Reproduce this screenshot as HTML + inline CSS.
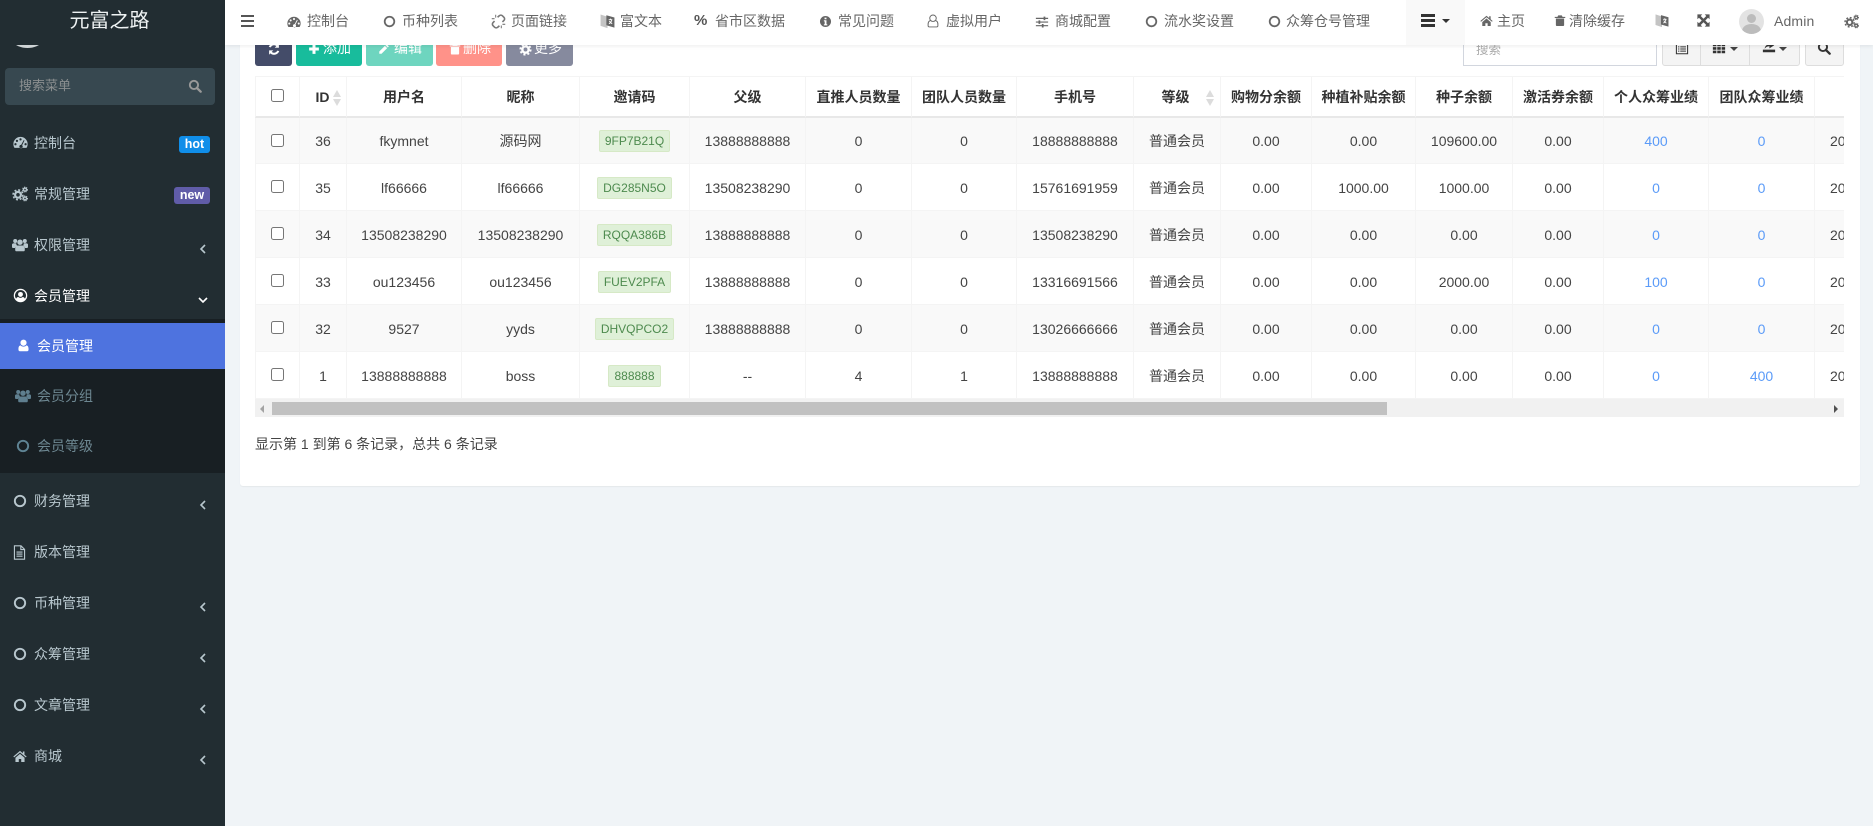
<!DOCTYPE html>
<html lang="zh-CN"><head><meta charset="utf-8"><title>会员管理</title>
<style>
*{box-sizing:border-box}
html,body{margin:0;padding:0;width:1873px;height:826px;overflow:hidden;background:#f0f4f7;font:14px "Liberation Sans","Noto Sans CJK SC",sans-serif;color:#444}
.a{position:absolute;white-space:nowrap}
svg.i{position:absolute;fill:currentColor;display:block}
#side{position:absolute;left:0;top:0;width:225px;height:826px;background:#222d32;overflow:hidden;color:#b8c7ce}
.mt{position:absolute;left:34px;height:20px;line-height:20px;white-space:nowrap}
.st{position:absolute;left:37px;height:20px;line-height:20px;white-space:nowrap}
#nav{position:absolute;left:225px;top:0;width:1648px;height:45px;background:#fff;box-shadow:0 1px 4px rgba(0,0,0,.08);z-index:5;color:#666}
.nt{position:absolute;top:11px;height:20px;line-height:20px;white-space:nowrap;color:#666}
.btn{position:absolute;top:25px;height:41px;border-radius:3px;color:#fff;line-height:48px}
#tb{position:absolute;left:255px;top:76px;width:1589px;height:323px;overflow:hidden}
table{border-collapse:separate;border-spacing:0;table-layout:fixed;width:1660px}
th,td{text-align:center;padding:0;border-right:1px solid #f4f4f4;white-space:nowrap;overflow:hidden}
th{height:42px;border-top:1px solid #f4f4f4;border-bottom:2px solid #e8e8e8;color:#333;font-weight:bold;position:relative}
td{height:47px;border-bottom:1px solid #f4f4f4;color:#444;padding-top:1px}
tr.f td{height:46px}
td:first-child,th:first-child{border-left:1px solid #f4f4f4}
tr.o td{background:#f9f9f9}
td.l{text-align:left;padding-left:15px}
th.l{text-align:left;padding-left:15px}
b.g{display:inline-block;font-weight:normal;font-size:12px;height:22px;line-height:20px;padding:0 5px;background:#dff0d8;border:1px solid #d6e9c6;color:#4d8a4e;border-radius:2px;vertical-align:middle}
.u{color:#5b9bf8}
input{margin:0;width:13px;height:13px;position:relative;top:-2px;vertical-align:middle}
.s1,.s2{position:absolute;width:0;height:0;border-left:4px solid transparent;border-right:4px solid transparent}
.s1{border-bottom:7px solid #dcdcdc}.s2{border-top:7px solid #dcdcdc}
.c{position:absolute;width:0;height:0;border-left:4px solid transparent;border-right:4px solid transparent;border-top:4px solid #444}
</style></head><body>
<svg width="0" height="0" style="position:absolute">
<symbol id="dash" viewBox="0 0 16 16"><path fill-rule="evenodd" d="M8 2A7.6 7.6 0 0 0 .4 9.6c0 1.6.4 2.9 1.2 4.1h12.8c.8-1.2 1.2-2.5 1.2-4.1A7.6 7.6 0 0 0 8 2zM8 3.4a1.2 1.2 0 1 1 0 2.4 1.2 1.2 0 0 1 0-2.4zM4.2 5a1.2 1.2 0 1 1 0 2.4 1.2 1.2 0 0 1 0-2.4zM2.6 8.6a1.2 1.2 0 1 1 0 2.4 1.2 1.2 0 0 1 0-2.4zM13.4 8.6a1.2 1.2 0 1 1 0 2.4 1.2 1.2 0 0 1 0-2.4zM11.4 5.4l.9.5-2.6 5a1.8 1.8 0 1 1-1-.4z"/></symbol>
<symbol id="cogs" viewBox="0 0 16 16"><g fill="none" stroke="currentColor"><circle cx="6" cy="8.8" r="2.9" stroke-width="2.2"/><circle cx="6" cy="8.8" r="4.9" stroke-width="1.6" stroke-dasharray="2 1.85"/><circle cx="13" cy="3.6" r="1.5" stroke-width="1.4"/><circle cx="13" cy="3.6" r="2.5" stroke-width="1" stroke-dasharray="1.1 1.02"/><circle cx="13" cy="12.4" r="1.5" stroke-width="1.4"/><circle cx="13" cy="12.4" r="2.5" stroke-width="1" stroke-dasharray="1.1 1.02"/></g></symbol>
<symbol id="users" viewBox="0 0 16 16"><circle cx="3.2" cy="4" r="2"/><circle cx="12.8" cy="4" r="2"/><circle cx="8" cy="5.2" r="2.7"/><path d="M0 7.6c0-1 1-1.4 2-1.4h2.2a4 4 0 0 0 .9 2.5c-1.2.4-2 1.3-2.2 2.3H1C.3 11 0 10.500 0 9.800zM16 7.600c0-1-1-1.400-2-1.400h-2.200a4 4 0 0 1-.9 2.500c1.200.4 2 1.300 2.200 2.300H15c.7 0 1-.5 1-1.200zM5.500 8.500h5c1.500 0 2.300 1.100 2.300 3v1.500c0 .8-.5 1.300-1.300 1.300h-7c-.8 0-1.300-.5-1.300-1.300v-1.500c0-1.900.8-3 2.300-3z"/></symbol>
<symbol id="uc" viewBox="0 0 16 16"><path fill-rule="evenodd" d="M8 .8a7.200 7.200 0 1 0 0 14.400A7.200 7.200 0 0 0 8 .8zM8 2.200a5.800 5.800 0 0 1 4.700 9.200c-.4-1.100-1.300-1.800-2.300-1.800a3.600 3.600 0 0 1-4.800 0c-1 0-1.900.7-2.300 1.800A5.800 5.800 0 0 1 8 2.200z"/><circle cx="8" cy="6.800" r="2.600"/></symbol>
<symbol id="user" viewBox="0 0 16 16"><circle cx="8" cy="4.600" r="3.800"/><path d="M4.300 7.800a5 5 0 0 0 7.400 0c1.500.2 2.500 1.800 2.500 4.200v1.200c0 1-.7 1.800-1.700 1.800H3.500c-1 0-1.700-.8-1.700-1.800V12c0-2.400 1-4 2.500-4.200z"/></symbol>
<symbol id="ring" viewBox="0 0 16 16"><circle cx="8" cy="8" r="5.900" fill="none" stroke="currentColor" stroke-width="2.200"/></symbol>
<symbol id="file" viewBox="0 0 16 16"><path fill="none" stroke="currentColor" stroke-width="1.200" d="M2.600.9h7l3.800 3.800v10.400H2.600zM9.400 1v3.900h3.900M4.800 7.500h6.400M4.800 9.700h6.400M4.800 11.900h6.400"/></symbol>
<symbol id="home" viewBox="0 0 16 16"><path d="M8 2.200.4 8.600l.9 1L8 4l6.700 5.600.9-1-2.500-2.100V2.800h-1.800v2.100zM2.800 10v4.800h3.800v-3.400h2.800v3.400h3.800V10L8 5.600z"/></symbol>
<symbol id="left" viewBox="0 0 10 12"><path d="M7 2 3 6l4 4" fill="none" stroke="currentColor" stroke-width="1.600"/></symbol>
<symbol id="down" viewBox="0 0 12 10"><path d="M2 3l4 4 4-4" fill="none" stroke="currentColor" stroke-width="1.600"/></symbol>
<symbol id="search" viewBox="0 0 16 16"><circle cx="6.800" cy="6.800" r="4.700" fill="none" stroke="currentColor" stroke-width="2.200"/><path d="M10.300 10.300l4.200 4.200" stroke="currentColor" stroke-width="2.600" stroke-linecap="round"/></symbol>
<symbol id="link" viewBox="0 0 16 16"><g fill="none" stroke="currentColor" stroke-width="1.700"><path d="M7 3.500 8.800 1.900a2.400 2.400 0 0 1 3.400 0l1.600 1.600a2.400 2.400 0 0 1 0 3.400L12.200 8.500M9 12.500l-1.800 1.600a2.400 2.400 0 0 1-3.400 0L2.200 12.500a2.400 2.400 0 0 1 0-3.400L3.800 7.500"/><path d="M.8 5h3M5 .8v3M15.200 11h-3M11 15.200v-3" stroke-width="1.100"/></g></symbol>
<symbol id="lang" viewBox="0 0 16 16"><path d="M.6 1 8 3.400V15.600L.6 13.200z" fill="#c4c4c4"/><path d="M6.800 1.800l8.600 2.500V15l-8.600-2.500z" fill="currentColor"/><path d="M9.300 6.600h3.800M11.200 5.400v1.400M12.500 7c-.5 2.200-1.600 3.300-3 3.900M10 8c.6 1.300 1.600 2.300 3 2.900" fill="none" stroke="#fff" stroke-width="1"/></symbol>
<symbol id="info" viewBox="0 0 16 16"><path fill-rule="evenodd" d="M8 1.200a6.800 6.800 0 1 0 0 13.600A6.800 6.800 0 0 0 8 1.200zM6.800 3.200h2.400v2H6.800zM6 6.400h3.200v5h1v1.400H6v-1.400h1v-3.600H6z"/></symbol>
<symbol id="uo" viewBox="0 0 16 16"><g fill="none" stroke="currentColor" stroke-width="1.100"><circle cx="8" cy="4.800" r="3.700"/><path d="M5 7.600C3.200 8 2.400 9.700 2.400 12v1.300c0 .9.600 1.500 1.500 1.500h8.200c.9 0 1.500-.6 1.500-1.500V12c0-2.300-.8-4-2.600-4.400"/></g></symbol>
<symbol id="sli" viewBox="0 0 16 16"><path d="M1 3.200h14v1.300H1zM1 7.400h14v1.300H1zM1 11.600h14v1.300H1z"/><path d="M9.800 1.900h2v4h-2zM4 6.100h2v4H4zM7.800 10.300h2v4h-2z"/></symbol>
<symbol id="trash" viewBox="0 0 16 16"><path fill-rule="evenodd" d="M5.600 1.200h4.800l1 2H15v1.400H1V3.200h3.600zM2.500 5.400h11v8.600c0 .8-.6 1.400-1.300 1.400H3.800c-.7 0-1.300-.6-1.300-1.400z"/></symbol>
<symbol id="exp" viewBox="0 0 16 16"><path d="M.5.500h6L4.600 2.400 8 5.800 11.400 2.400 9.500.5h6v6l-1.900-1.900L10.200 8l3.400 3.400 1.900-1.900v6h-6l1.900-1.900L8 10.200l-3.400 3.400 1.900 1.900h-6v-6l1.900 1.900L5.800 8 2.400 4.600.5 6.500z"/></symbol>
<symbol id="sync" viewBox="0 0 16 16"><path d="M13.600 1.500v5H8.800l1.800-1.800A4 4 0 0 0 4.300 6.200L2 5.600A6.400 6.400 0 0 1 12.300 3zM2.400 14.500v-5h4.800l-1.800 1.800a4 4 0 0 0 6.300-1.500l2.300.6A6.400 6.400 0 0 1 3.700 13z"/></symbol>
<symbol id="plus" viewBox="0 0 16 16"><path d="M6 1.500h4V6h4.500v4H10v4.500H6V10H1.500V6H6z"/></symbol>
<symbol id="pen" viewBox="0 0 16 16"><path d="M11.500 1.500 14.500 4.500 13 6 10 3zM9.200 3.800l3 3-7.500 7.500H1.700v-3z"/></symbol>
<symbol id="gear" viewBox="0 0 16 16"><circle cx="8" cy="8" r="3.900" fill="none" stroke="currentColor" stroke-width="3"/><circle cx="8" cy="8" r="6.300" fill="none" stroke="currentColor" stroke-width="2.400" stroke-dasharray="2.500 2.450"/></symbol>
<symbol id="cols" viewBox="0 0 16 16"><path d="M1 3h4v3H1zM6 3h4v3H6zM11 3h4v3h-4zM1 7h4v3H1zM6 7h4v3H6zM11 7h4v3h-4zM1 11h4v3H1zM6 11h4v3H6zM11 11h4v3h-4z"/></symbol>
<symbol id="list" viewBox="0 0 16 16"><path fill-rule="evenodd" d="M1 2h14v12H1zM2.200 3.200v9.600h11.600V3.200z"/><path d="M3.500 5h1.500v1.200H3.500zM6 5h6.500v1.200H6zM3.500 7.400h1.500v1.200H3.500zM6 7.400h6.500v1.200H6zM3.500 9.800h1.500V11H3.500zM6 9.800h6.500V11H6z"/></symbol>
<symbol id="dl" viewBox="0 0 16 16"><path d="M1 11h14v3H1zM3 10c.5-3 2-5 5.500-5V2.500L14 6l-5.500 3.500V7.200C6 7.200 4.500 8 3 10z"/></symbol>
</svg>

<div id="side">
<div class="a" style="left:0;top:0;width:219px;height:45px;line-height:42px;text-align:center;font-size:20px;color:#eef2f3;background:#222d32">元富之路</div>
<div class="a" style="left:0;top:45px;width:60px;height:3px;overflow:hidden"><div class="a" style="left:3.500px;top:-44px;width:47px;height:47px;border-radius:50%;background:#cfd4d6"></div></div>
<div class="a" style="left:5px;top:68px;width:210px;height:37px;background:#374850;border-radius:4px"></div>
<div class="a" style="left:19px;top:76px;height:20px;line-height:20px;font-size:13px;color:#8b8f90">搜索菜单</div>
<svg class="i" style="left:188px;top:79px;width:14px;height:14px;color:#999"><use href="#search"/></svg>

<svg class="i" style="left:13px;top:135px;width:15px;height:15px"><use href="#dash"/></svg><div class="mt" style="top:133px">控制台</div>
<div class="a" style="left:179px;top:136px;width:31px;height:17px;line-height:16px;background:#108ee9;border-radius:3px;color:#fff;font-weight:bold;font-size:12.500px;text-align:center">hot</div>
<svg class="i" style="left:12px;top:186px;width:16px;height:16px"><use href="#cogs"/></svg><div class="mt" style="top:184px">常规管理</div>
<div class="a" style="left:174px;top:187px;width:36px;height:17px;line-height:16px;background:#605ca8;border-radius:3px;color:#fff;font-weight:bold;font-size:12.500px;text-align:center">new</div>
<svg class="i" style="left:12px;top:237px;width:16px;height:16px"><use href="#users"/></svg><div class="mt" style="top:235px">权限管理</div>
<svg class="i" style="left:198px;top:243px;width:10px;height:12px"><use href="#left"/></svg>
<svg class="i" style="left:13px;top:288px;width:15px;height:15px;color:#fff"><use href="#uc"/></svg><div class="mt" style="top:286px;color:#fff">会员管理</div>
<svg class="i" style="left:197px;top:295px;width:12px;height:10px;color:#fff"><use href="#down"/></svg>

<div class="a" style="left:0;top:319px;width:225px;height:154px;background:#181f23"></div>
<div class="a" style="left:0;top:323px;width:225px;height:46px;background:#4e73df"></div>
<svg class="i" style="left:17px;top:339px;width:13px;height:13px;color:#fff"><use href="#user"/></svg><div class="st" style="top:336px;color:#fff">会员管理</div>
<svg class="i" style="left:15px;top:388px;width:16px;height:16px;color:#5f7f8f"><use href="#users"/></svg><div class="st" style="top:386px;color:#6d8791">会员分组</div>
<svg class="i" style="left:16px;top:439px;width:14px;height:14px;color:#5f8494"><use href="#ring"/></svg><div class="st" style="top:436px;color:#6d8791">会员等级</div>

<svg class="i" style="left:13px;top:494px;width:14px;height:14px"><use href="#ring"/></svg><div class="mt" style="top:491px">财务管理</div>
<svg class="i" style="left:198px;top:499px;width:10px;height:12px"><use href="#left"/></svg>
<svg class="i" style="left:12px;top:545px;width:15px;height:15px"><use href="#file"/></svg><div class="mt" style="top:542px">版本管理</div>
<svg class="i" style="left:13px;top:596px;width:14px;height:14px"><use href="#ring"/></svg><div class="mt" style="top:593px">币种管理</div>
<svg class="i" style="left:198px;top:601px;width:10px;height:12px"><use href="#left"/></svg>
<svg class="i" style="left:13px;top:647px;width:14px;height:14px"><use href="#ring"/></svg><div class="mt" style="top:644px">众筹管理</div>
<svg class="i" style="left:198px;top:652px;width:10px;height:12px"><use href="#left"/></svg>
<svg class="i" style="left:13px;top:698px;width:14px;height:14px"><use href="#ring"/></svg><div class="mt" style="top:695px">文章管理</div>
<svg class="i" style="left:198px;top:703px;width:10px;height:12px"><use href="#left"/></svg>
<svg class="i" style="left:13px;top:749px;width:14px;height:14px"><use href="#home"/></svg><div class="mt" style="top:746px">商城</div>
<svg class="i" style="left:198px;top:754px;width:10px;height:12px"><use href="#left"/></svg>
</div>

<div id="nav">
<div class="a" style="left:16px;top:15px;width:13px;height:2px;background:#555"></div><div class="a" style="left:16px;top:20px;width:13px;height:2px;background:#555"></div><div class="a" style="left:16px;top:25px;width:13px;height:2px;background:#555"></div>
<svg class="i" style="left:62px;top:15px;width:14px;height:14px"><use href="#dash"/></svg><div class="nt" style="left:82px">控制台</div>
<svg class="i" style="left:158px;top:15px;width:13px;height:13px"><use href="#ring"/></svg><div class="nt" style="left:177px">币种列表</div>
<svg class="i" style="left:266px;top:14px;width:15px;height:15px;color:#777"><use href="#link"/></svg><div class="nt" style="left:286px">页面链接</div>
<svg class="i" style="left:375px;top:13px;width:15px;height:16px"><use href="#lang"/></svg><div class="nt" style="left:395px">富文本</div>
<div class="a" style="left:469px;top:11px;line-height:20px;font-weight:bold;font-size:15px;color:#555">%</div><div class="nt" style="left:490px">省市区数据</div>
<svg class="i" style="left:594px;top:15px;width:13px;height:13px"><use href="#info"/></svg><div class="nt" style="left:613px">常见问题</div>
<svg class="i" style="left:701px;top:14px;width:14px;height:14px"><use href="#uo"/></svg><div class="nt" style="left:721px">虚拟用户</div>
<svg class="i" style="left:810px;top:15px;width:14px;height:14px"><use href="#sli"/></svg><div class="nt" style="left:830px">商城配置</div>
<svg class="i" style="left:920px;top:15px;width:13px;height:13px"><use href="#ring"/></svg><div class="nt" style="left:939px">流水奖设置</div>
<svg class="i" style="left:1043px;top:15px;width:13px;height:13px"><use href="#ring"/></svg><div class="nt" style="left:1061px">众筹仓号管理</div>
<div class="a" style="left:1181px;top:0;width:59px;height:45px;background:#f9f9f9"></div>
<div class="a" style="left:1196px;top:14px;width:14px;height:3px;background:#333"></div><div class="a" style="left:1196px;top:19px;width:14px;height:3px;background:#333"></div><div class="a" style="left:1196px;top:24px;width:14px;height:3px;background:#333"></div>
<div class="c" style="left:1217px;top:19px;border-top-color:#333"></div>
<svg class="i" style="left:1255px;top:14px;width:13px;height:13px"><use href="#home"/></svg><div class="nt" style="left:1272px">主页</div>
<svg class="i" style="left:1329px;top:14px;width:12px;height:13px"><use href="#trash"/></svg><div class="nt" style="left:1344px">清除缓存</div>
<svg class="i" style="left:1430px;top:13px;width:14px;height:15px"><use href="#lang"/></svg>
<svg class="i" style="left:1472px;top:14px;width:13px;height:13px;color:#555"><use href="#exp"/></svg>
<div class="a" style="left:1514px;top:9px;width:25px;height:25px;border-radius:50%;background:#e3e3e3;overflow:hidden"><div class="a" style="left:8px;top:5px;width:9px;height:9px;border-radius:50%;background:#bcbcbc"></div><div class="a" style="left:3px;top:15px;width:19px;height:14px;border-radius:50%;background:#bcbcbc"></div></div>
<div class="nt" style="left:1549px;letter-spacing:.15px">Admin</div>
<svg class="i" style="left:1619px;top:14px;width:15px;height:15px"><use href="#cogs"/></svg>
</div>

<div class="a" style="left:240px;top:0;width:1620px;height:486px;background:#fff;border-radius:3px;box-shadow:0 1px 1px rgba(0,0,0,.05)"></div>

<div class="btn" style="left:255px;width:37px;background:#444c69"></div><svg class="i" style="left:267px;top:42px;width:14px;height:14px;color:#fff"><use href="#sync"/></svg>
<div class="btn" style="left:296px;width:66px;background:#18bc9c"></div><svg class="i" style="left:308px;top:43px;width:12px;height:12px;color:#fff"><use href="#plus"/></svg><div class="a" style="left:323px;top:38px;line-height:20px;color:#fff">添加</div>
<div class="btn" style="left:366px;width:67px;background:#6ed5bf"></div><svg class="i" style="left:378px;top:43px;width:12px;height:12px;color:#fff"><use href="#pen"/></svg><div class="a" style="left:394px;top:38px;line-height:20px;color:#fff">编辑</div>
<div class="btn" style="left:436px;width:66px;background:#ff9289"></div><svg class="i" style="left:449px;top:43px;width:12px;height:12px;color:#fff"><use href="#trash"/></svg><div class="a" style="left:463px;top:38px;line-height:20px;color:#fff">删除</div>
<div class="btn" style="left:506px;width:67px;background:#868a9e"></div><svg class="i" style="left:519px;top:43px;width:13px;height:13px;color:#fff"><use href="#gear"/></svg><div class="a" style="left:534px;top:38px;line-height:20px;color:#fff">更多</div>

<div class="a" style="left:1463px;top:25px;width:194px;height:41px;border:1px solid #d2d6de;background:#fff"></div>
<div class="a" style="left:1476px;top:40px;line-height:20px;font-size:12.500px;color:#aaa">搜索</div>
<div class="a" style="left:1662px;top:25px;width:138px;height:41px;border:1px solid #ddd;background:#f4f4f4;border-radius:3px"></div>
<div class="a" style="left:1700px;top:25px;width:1px;height:41px;background:#ddd"></div>
<div class="a" style="left:1749px;top:25px;width:1px;height:41px;background:#ddd"></div>
<div class="a" style="left:1805px;top:25px;width:39px;height:41px;border:1px solid #ddd;background:#f4f4f4;border-radius:3px"></div>
<svg class="i" style="left:1675px;top:42px;width:14px;height:14px;color:#333"><use href="#list"/></svg>
<svg class="i" style="left:1712px;top:41px;width:14px;height:14px;color:#333"><use href="#cols"/></svg><div class="c" style="left:1730px;top:47px"></div>
<svg class="i" style="left:1762px;top:40px;width:14px;height:14px;color:#333"><use href="#dl"/></svg><div class="c" style="left:1779px;top:47px"></div>
<svg class="i" style="left:1817px;top:41px;width:14px;height:14px;color:#333"><use href="#search"/></svg>

<div id="tb"><table>
<colgroup><col style="width:45px"><col style="width:47px"><col style="width:115px"><col style="width:118px"><col style="width:110px"><col style="width:116px"><col style="width:106px"><col style="width:105px"><col style="width:117px"><col style="width:87px"><col style="width:91px"><col style="width:104px"><col style="width:97px"><col style="width:91px"><col style="width:105px"><col style="width:106px"><col style="width:200px"></colgroup>
<tr><th><input type="checkbox"></th><th style="padding-right:1px">ID<i class="s1" style="left:33px;top:13px"></i><i class="s2" style="left:33px;top:22px"></i></th><th>用户名</th><th>昵称</th><th>邀请码</th><th>父级</th><th>直推人员数量</th><th>团队人员数量</th><th>手机号</th><th style="padding-right:3px">等级<i class="s1" style="left:72px;top:13px"></i><i class="s2" style="left:72px;top:22px"></i></th><th>购物分余额</th><th>种植补贴余额</th><th>种子余额</th><th>激活券余额</th><th>个人众筹业绩</th><th>团队众筹业绩</th><th class="l"></th></tr>
<tr class="o f"><td><input type="checkbox"></td><td>36</td><td>fkymnet</td><td>源码网</td><td><b class="g">9FP7B21Q</b></td><td>13888888888</td><td>0</td><td>0</td><td>18888888888</td><td>普通会员</td><td>0.00</td><td>0.00</td><td>109600.00</td><td>0.00</td><td class="u">400</td><td class="u">0</td><td class="l">2022-01-01 10:00:00</td></tr>
<tr><td><input type="checkbox"></td><td>35</td><td>lf66666</td><td>lf66666</td><td><b class="g">DG285N5O</b></td><td>13508238290</td><td>0</td><td>0</td><td>15761691959</td><td>普通会员</td><td>0.00</td><td>1000.00</td><td>1000.00</td><td>0.00</td><td class="u">0</td><td class="u">0</td><td class="l">2022-01-01 10:00:00</td></tr>
<tr class="o"><td><input type="checkbox"></td><td>34</td><td>13508238290</td><td>13508238290</td><td><b class="g">RQQA386B</b></td><td>13888888888</td><td>0</td><td>0</td><td>13508238290</td><td>普通会员</td><td>0.00</td><td>0.00</td><td>0.00</td><td>0.00</td><td class="u">0</td><td class="u">0</td><td class="l">2022-01-01 10:00:00</td></tr>
<tr><td><input type="checkbox"></td><td>33</td><td>ou123456</td><td>ou123456</td><td><b class="g">FUEV2PFA</b></td><td>13888888888</td><td>0</td><td>0</td><td>13316691566</td><td>普通会员</td><td>0.00</td><td>0.00</td><td>2000.00</td><td>0.00</td><td class="u">100</td><td class="u">0</td><td class="l">2022-01-01 10:00:00</td></tr>
<tr class="o"><td><input type="checkbox"></td><td>32</td><td>9527</td><td>yyds</td><td><b class="g">DHVQPCO2</b></td><td>13888888888</td><td>0</td><td>0</td><td>13026666666</td><td>普通会员</td><td>0.00</td><td>0.00</td><td>0.00</td><td>0.00</td><td class="u">0</td><td class="u">0</td><td class="l">2022-01-01 10:00:00</td></tr>
<tr><td><input type="checkbox"></td><td>1</td><td>13888888888</td><td>boss</td><td><b class="g">888888</b></td><td>--</td><td>4</td><td>1</td><td>13888888888</td><td>普通会员</td><td>0.00</td><td>0.00</td><td>0.00</td><td>0.00</td><td class="u">0</td><td class="u">400</td><td class="l">2022-01-01 10:00:00</td></tr>
</table></div>

<div class="a" style="left:255px;top:399px;width:1589px;height:18px;background:#f1f1f1"></div>
<div class="a" style="left:272px;top:402px;width:1115px;height:13px;background:#c1c1c1"></div>
<div class="a" style="left:260px;top:405px;width:0;height:0;border-top:4px solid transparent;border-bottom:4px solid transparent;border-right:4px solid #a3a3a3"></div>
<div class="a" style="left:1834px;top:405px;width:0;height:0;border-top:4px solid transparent;border-bottom:4px solid transparent;border-left:4px solid #505050"></div>
<div class="a" style="left:255px;top:434px;line-height:20px;font-size:14px;color:#444">显示第 1 到第 6 条记录，总共 6 条记录</div>
</body></html>
